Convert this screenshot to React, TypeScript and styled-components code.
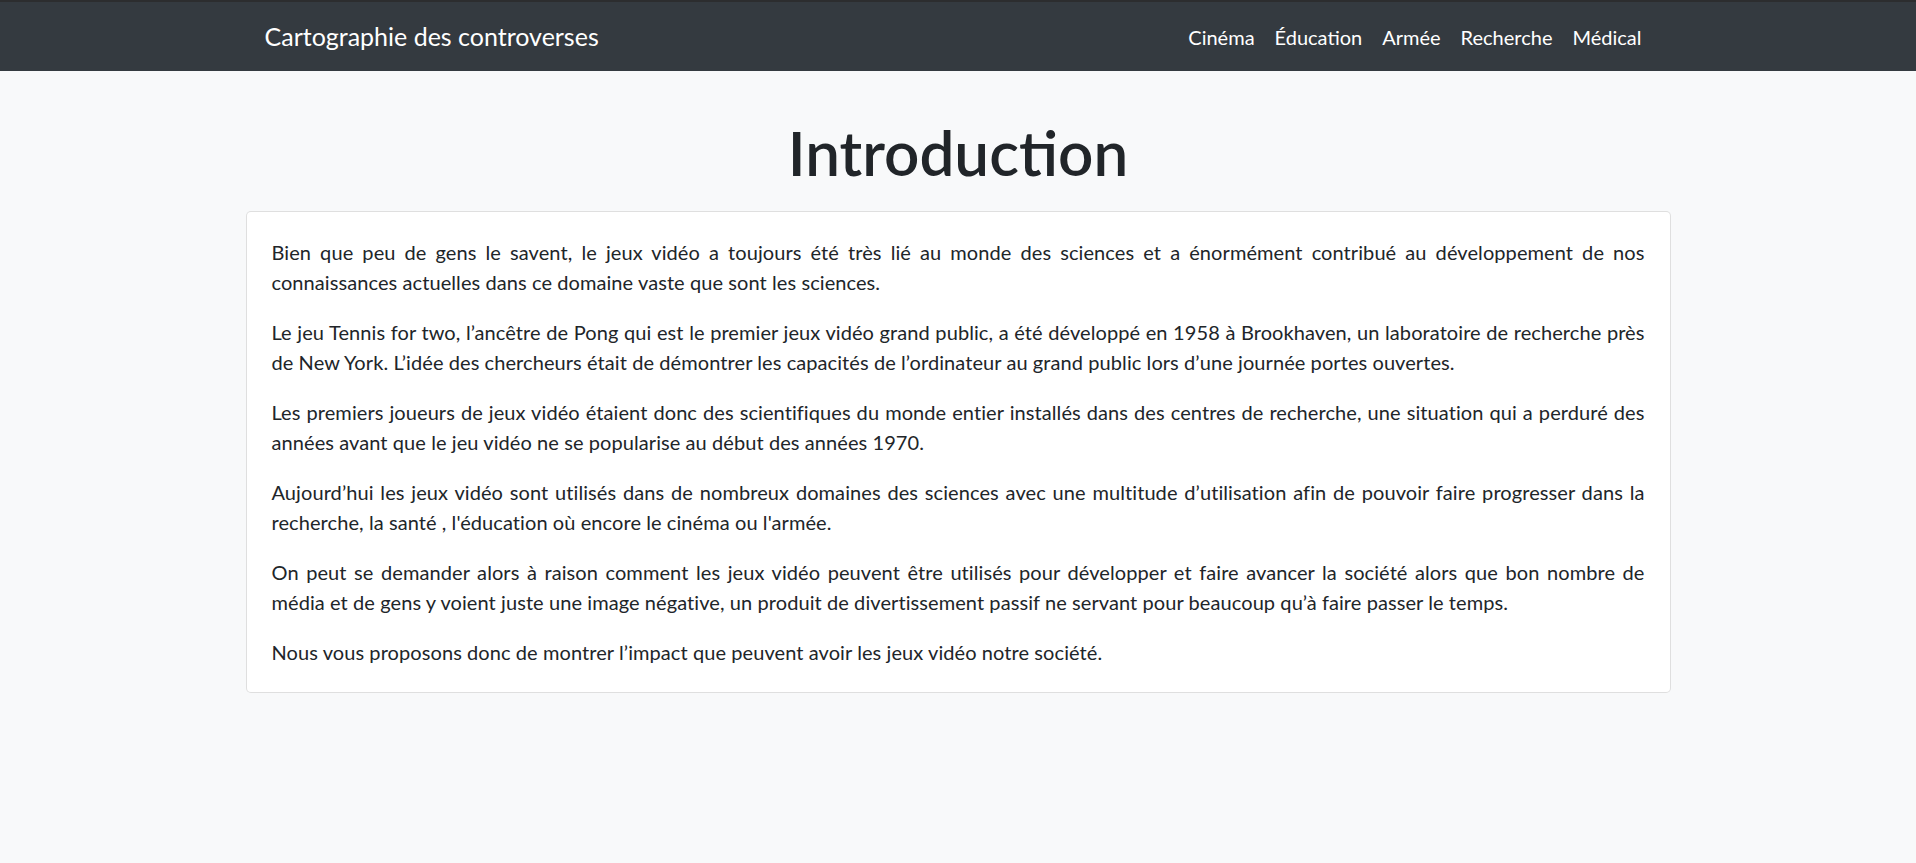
import styled, { createGlobalStyle } from "styled-components";

const GlobalStyle = createGlobalStyle`
  html, body {
    margin: 0;
    padding: 0;
  }
  body {
    background-color: #f8f9fa;
    color: #212529;
    font-family: Lato, "Noto Sans", "Liberation Sans", sans-serif;
    font-size: 20px;
    line-height: 30px;
  }
  * {
    box-sizing: border-box;
  }
`;

const links = ["Cinéma", "Éducation", "Armée", "Recherche", "Médical"];

const paragraphs = [
  "Bien que peu de gens le savent, le jeux vidéo a toujours été très lié au monde des sciences et a énormément contribué au développement de nos connaissances actuelles dans ce domaine vaste que sont les sciences.",
  "Le jeu Tennis for two, l’ancêtre de Pong qui est le premier jeux vidéo grand public, a été développé en 1958 à Brookhaven, un laboratoire de recherche près de New York. L’idée des chercheurs était de démontrer les capacités de l’ordinateur au grand public lors d’une journée portes ouvertes.",
  "Les premiers joueurs de jeux vidéo étaient donc des scientifiques du monde entier installés dans des centres de recherche, une situation qui a perduré des années avant que le jeu vidéo ne se popularise au début des années 1970.",
  "Aujourd’hui les jeux vidéo sont utilisés dans de nombreux domaines des sciences avec une multitude d’utilisation afin de pouvoir faire progresser dans la recherche, la santé , l'éducation où encore le cinéma ou l'armée.",
  "On peut se demander alors à raison comment les jeux vidéo peuvent être utilisés pour développer et faire avancer la société alors que bon nombre de média et de gens y voient juste une image négative, un produit de divertissement passif ne servant pour beaucoup qu’à faire passer le temps.",
  "Nous vous proposons donc de montrer l’impact que peuvent avoir les jeux vidéo notre société.",
];

export default function App() {
  return (
    <>
      <GlobalStyle />
      <Navbar>
        <NavContainer>
          <Brand href="#">Cartographie des controverses</Brand>
          <NavList>
            {links.map((l) => (
              <NavItem key={l}>
                <NavLink href="#">{l}</NavLink>
              </NavItem>
            ))}
          </NavList>
        </NavContainer>
      </Navbar>
      <Main>
        <Title>Introduction</Title>
        <Card>
          <CardBody>
            {paragraphs.map((p, i) => (
              <Text key={i}>{p}</Text>
            ))}
          </CardBody>
        </Card>
      </Main>
    </>
  );
}

const Navbar = styled.nav`
  background-color: #343a40;
  border-top: 2px solid #2c2d2f;
  padding: 8px 20px;
  height: 71px;
  display: flex;
  align-items: center;
`;

const NavContainer = styled.div`
  width: 1425px;
  margin: 0 auto;
  padding: 0 19px;
  display: flex;
  align-items: center;
  justify-content: space-between;
`;

const Brand = styled.a`
  color: #fff;
  text-decoration: none;
  font-size: 25px;
  line-height: 37px;
  padding: 6px 0;
`;

const NavList = styled.ul`
  list-style: none;
  margin: 0;
  padding: 0;
  display: flex;
`;

const NavItem = styled.li`
  display: block;
`;

const NavLink = styled.a`
  display: block;
  color: #fff;
  text-decoration: none;
  font-size: 20px;
  line-height: 30px;
  padding: 10px 10px;
`;

const Main = styled.main`
  width: 1425px;
  margin: 0 auto;
`;

const Title = styled.h1`
  margin: 39px 0 17px;
  text-align: center;
  font-size: 62px;
  line-height: 84px;
  font-weight: 600;
  color: #212529;
`;

const Card = styled.div`
  background-color: #fff;
  border: 1px solid rgba(0, 0, 0, 0.125);
  border-radius: 5px;
`;

const CardBody = styled.div`
  padding: 25px;
`;

const Text = styled.p`
  margin: 0 0 20px;
  text-align: justify;
  letter-spacing: 0.08px;
  &:last-child {
    margin-bottom: 0;
  }
`;
